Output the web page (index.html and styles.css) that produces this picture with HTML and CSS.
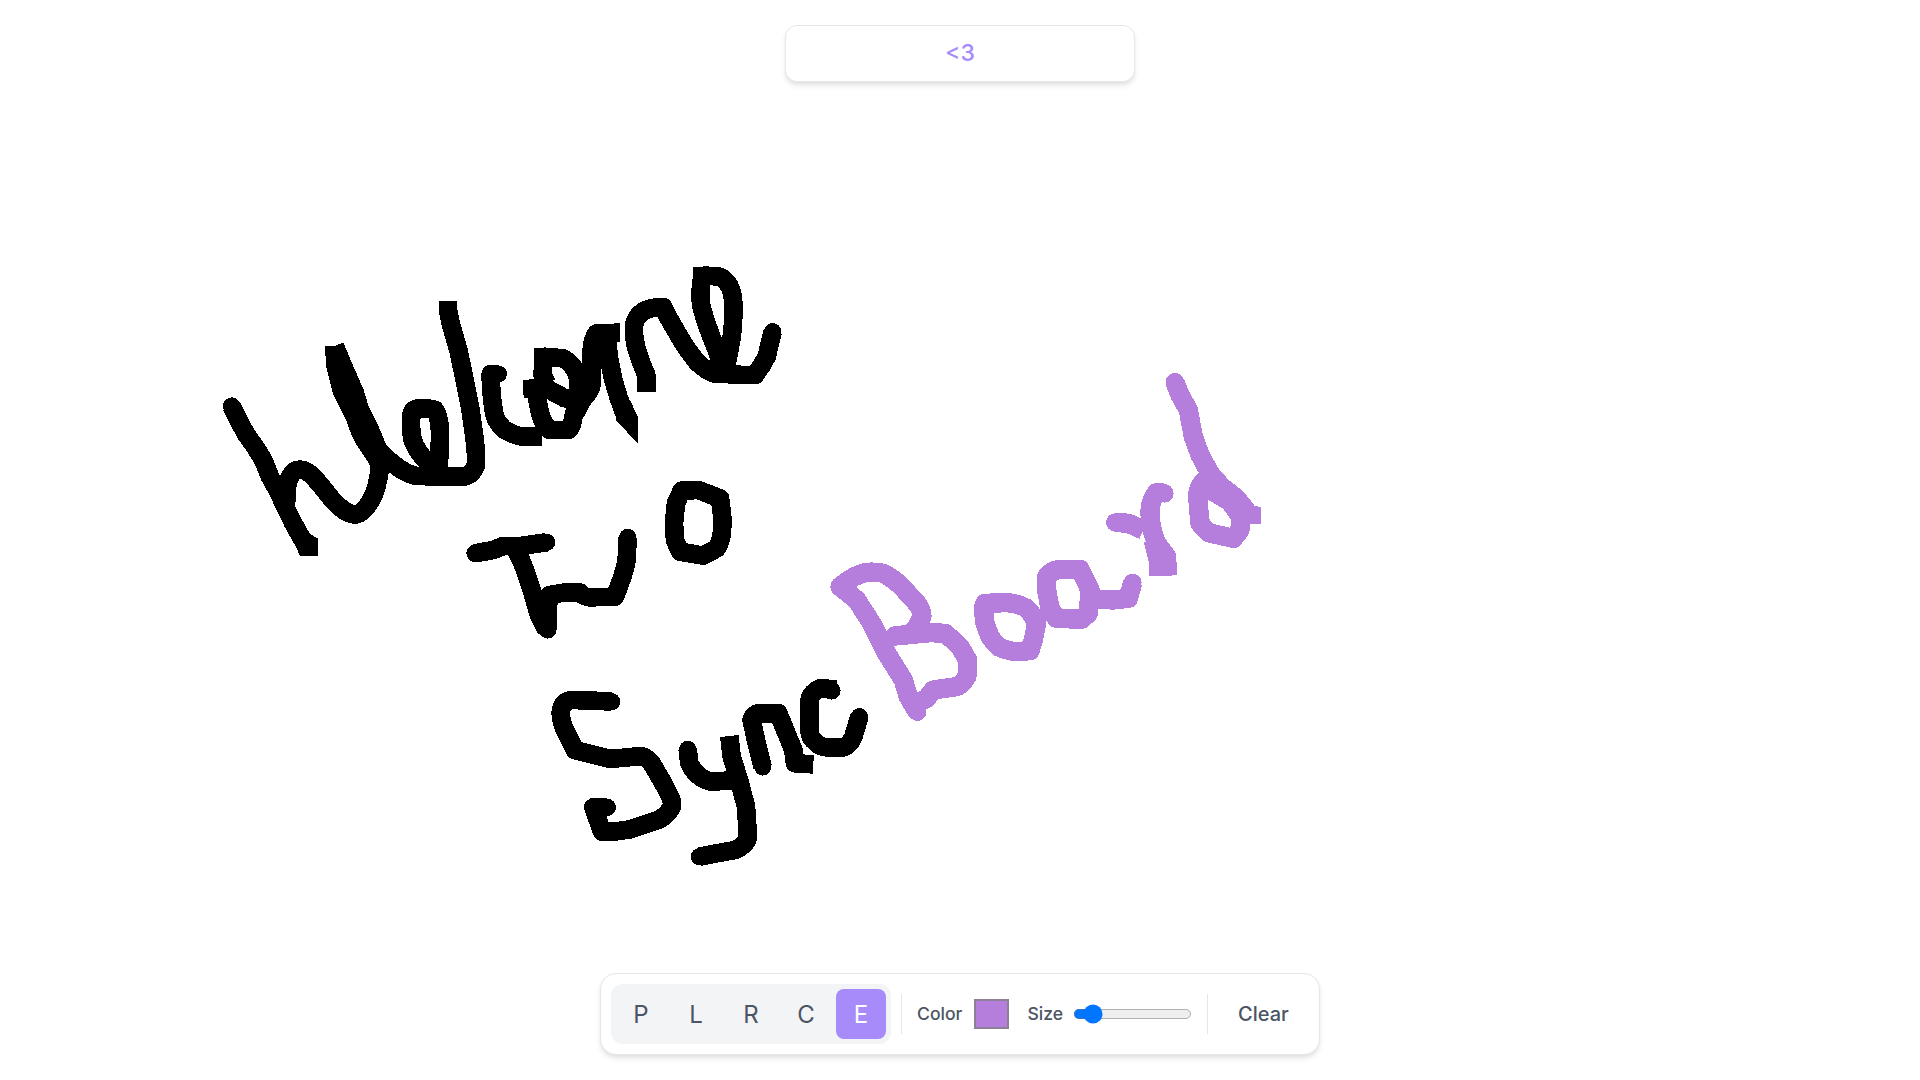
FILE: index.html
```html
<!DOCTYPE html>
<html lang="en">
<head>
<meta charset="utf-8">
<title>SyncBoard</title>
<link rel="stylesheet" href="styles.css">
</head>
<body>
<main class="app">
  <svg class="board" viewBox="0 0 1920 1080" aria-hidden="true">
    <g class="ink ink-black" transform="translate(210 250) scale(.33333)">
      <circle cx="65" cy="468" r="26"/>
      <path d="M65 468L85 510L110 555L135 590L160 630L180 680L205 725L228 775L250 820L275 865"/>
      <polygon points="250,875 270,917 323,917 323,865 297,850"/>
      <path d="M228 775L229 738Q230 700 240 680Q250 660 268 659Q285 658 303 674Q320 690 338 713Q355 735 370 753Q385 770 405 783Q425 795 440 793Q455 790 470 770Q485 750 493 730Q500 710 505 685Q510 660 508 645Q505 630 480 595Q455 560 445 530L435 500L395 420L375 340L374 288"/>
      <path d="M374 288L400 350L435 430L450 480L480 540L505 600L525 620Q545 640 572 658Q600 675 620 678L720 680L760 680Q785 678 798 645Q800 620 793 560L780 470L762 380L745 300L722 220L714 180L714 152"/>
      <path d="M680 680Q688 650 688 620Q690 580 690 545Q688 500 675 480Q668 475 640 475Q610 473 605 490Q600 530 608 570Q618 600 650 635L680 680"/>
    </g>
    <g class="ink ink-black" transform="translate(450 250) scale(.33333)">
      <circle cx="145" cy="372" r="26"/>
      <path d="M145 372L122 372Q122 400 125 430Q128 470 135 500Q145 525 165 540Q190 555 215 560L275 560"/>
      <path d="M280 295L280 320L278 375L290 400"/>
      <path d="M280 320L340 325Q365 340 378 365Q390 400 385 430Q380 470 370 500Q365 540 352 540L300 540Q280 525 270 490L257 420"/>
      <path d="M220 417L290 415L345 445L385 445"/>
      <path d="M370 500L400 445Q425 420 425 400L425 300Q428 265 440 250L510 248"/>
      <path d="M470 262L478 330L490 390L505 440L530 510"/>
      <polygon points="497,510 563,580 563,500 540,450"/>
      <path d="M589 425L589 375Q565 320 557 285Q550 250 552 228Q555 205 572 190Q590 175 615 173L640 172Q650 195 665 220L700 280Q720 310 740 335Q765 360 790 370L880 375L915 375Q935 350 950 320L968 245"/>
      <circle cx="968" cy="245" r="26"/>
      <path d="M757 50L757 78Q745 150 760 190Q775 240 800 300L825 370"/>
      <path d="M757 76L810 80Q848 100 850 160Q852 240 838 300L825 370"/>
    </g>
    <g class="ink ink-black" transform="translate(450 460) scale(.33333)">
      <circle cx="75" cy="280" r="26"/>
      <circle cx="290" cy="247" r="26"/>
      <path d="M75 280L130 270L160 258L210 258L290 247"/>
      <path d="M198 270Q215 300 230 345L248 400L265 460L290 510"/>
      <circle cx="293" cy="510" r="26"/>
      <circle cx="533" cy="232" r="26"/>
      <path d="M533 232L530 300Q522 340 510 370L495 410L420 412Q400 410 390 398L340 398L300 405L293 440L293 510"/>
      <path d="M695 92L745 90L810 115L818 180L815 225Q810 250 800 265L760 287L690 275L675 240L672 190L678 130Z"/>
    </g>
    <g class="ink ink-black" transform="translate(530 670) scale(.33333)">
      <circle cx="245" cy="95" r="26"/>
      <circle cx="232" cy="412" r="26"/>
      <path d="M245 95L215 93L130 90Q93 92 92 130Q95 165 110 190L135 240L240 267L335 258Q355 265 365 280L400 340L423 385Q430 410 420 420Q405 440 385 450L300 478L250 485L216 485L190 412L232 412"/>
      <circle cx="473" cy="238" r="26"/>
      <path d="M473 238L478 280Q490 305 510 320Q530 335 550 335L615 330"/>
      <path d="M598 198L605 260L630 340L648 410L652 470L652 510Q640 530 615 540L560 550L508 560"/>
      <circle cx="508" cy="560" r="26"/>
      <circle cx="698" cy="292" r="25"/>
      <path d="M698 292L680 220L665 150Q672 130 690 130L745 130L790 240L795 280L850 283"/>
      <path d="M920 58L870 55Q838 70 838 100L838 180Q840 205 855 215Q870 232 890 232L940 232Q960 225 970 200L988 140"/>
      <circle cx="988" cy="140" r="26"/>
      <circle cx="905" cy="62" r="27"/>
    </g>
    <g class="ink ink-lilac" transform="translate(820 360) scale(.33333)">
      <circle cx="60" cy="680" r="28"/>
      <circle cx="292" cy="1056" r="27"/>
      <path d="M292 1056L265 1010L250 960L200 880L155 790L110 720L60 680Q100 645 140 637Q170 635 190 640Q220 655 245 680L295 735Q310 760 305 770Q290 810 270 822L225 828L330 818L375 820Q400 840 420 860L443 900Q445 930 440 950Q425 975 410 980L340 990L320 1015L292 1030"/>
      <path d="M495 730L560 728Q595 730 620 745Q640 765 650 790L640 840L630 872L585 875Q555 870 535 860Q520 845 510 830L495 790L490 745Z"/>
      <path d="M680 650Q695 630 720 628L780 628L810 690L805 760L785 778L710 775L690 745L680 690Z"/>
      <path d="M808 716L880 720L925 715L938 668"/>
      <circle cx="938" cy="668" r="27"/>
      <circle cx="885" cy="487" r="27"/>
      <path d="M885 487L925 490L970 510"/>
      <circle cx="1033" cy="400" r="28"/>
      <path d="M1033 398L1010 398Q990 420 990 460Q992 510 1010 550L1040 590L1042 647"/>
      <path d="M1000 540L1015 600L1015 647"/>
      <circle cx="1065" cy="67" r="28"/>
      <path d="M1065 67L1080 105L1105 150L1120 230L1140 285L1170 340L1205 380L1250 415L1285 460"/>
      <polygon points="1322,440 1322,493 1280,493 1260,440 1290,438"/>
      <path d="M1150 365Q1133 385 1133 410L1140 490L1165 518L1240 535L1260 510L1262 470L1230 425L1180 395Z"/>
    </g>
  </svg>

  <input class="room" type="text" value="&lt;3" aria-label="Room name">

  <div class="toolbar">
    <div class="tools">
      <button class="tool">P</button>
      <button class="tool">L</button>
      <button class="tool">R</button>
      <button class="tool">C</button>
      <button class="tool tool-active">E</button>
    </div>
    <span class="divider"></span>
    <label class="field field-color">Color <input class="swatch" type="color" value="#b57edc"></label>
    <label class="field field-size">Size <input class="slider" type="range" min="1" max="50" value="6"></label>
    <span class="divider divider-end"></span>
    <button class="clear">Clear</button>
  </div>
</main>
</body>
</html>
```

FILE: styles.css
```css
* {
  box-sizing: border-box;
}

html,
body {
  margin: 0;
  height: 100%;
  background: #fff;
}

.app {
  position: relative;
  height: 1080px;
  display: flex;
  flex-direction: column;
  align-items: center;
  justify-content: space-between;
  padding: 25px 0 25px;
  font-family: Inter, "Liberation Sans", sans-serif;
  overflow: hidden;
}

.board {
  position: absolute;
  inset: 0;
  width: 1920px;
  height: 1080px;
}

.ink {
  shape-rendering: crispEdges;
}

.ink path {
  fill: none;
  stroke: currentColor;
  stroke-linejoin: round;
}

.ink circle,
.ink polygon {
  fill: currentColor;
}

.ink-black {
  color: #000;
}

.ink-black path {
  stroke-width: 56;
}

.ink-lilac {
  color: #b57edc;
}

.ink-lilac path {
  stroke-width: 58;
}

.room {
  position: relative;
  width: 350px;
  height: 57px;
  border: 1px solid #e5e7eb;
  border-radius: 12px;
  background: #fff;
  box-shadow: 0 4px 6px -1px rgba(0, 0, 0, .1), 0 2px 4px -1px rgba(0, 0, 0, .06);
  color: #a78bfa;
  font: 500 23px Inter, sans-serif;
  line-height: 1;
  padding: 0 0 2px;
  text-align: center;
  outline: none;
}

.toolbar {
  position: relative;
  width: 720px;
  height: 82px;
  display: flex;
  align-items: center;
  padding: 0 10px;
  border: 1px solid #e5e7eb;
  border-radius: 16px;
  background: #fff;
  box-shadow: 0 4px 6px -1px rgba(0, 0, 0, .1), 0 2px 4px -1px rgba(0, 0, 0, .06);
}

.tools {
  display: flex;
  gap: 5px;
  padding: 5px;
  border-radius: 12px;
  background: #f3f4f6;
}

.tool {
  width: 50px;
  height: 50px;
  padding: 0;
  border: 0;
  border-radius: 8px;
  background: transparent;
  color: #4b5563;
  font: 400 24px Inter, sans-serif;
}

.tool-active {
  background: #a78bfa;
  color: #fff;
}

.divider {
  width: 1px;
  height: 40px;
  margin: 0 15px 0 10px;
  background: #e5e7eb;
}

.divider-end {
  margin: 0;
}

.field {
  display: flex;
  align-items: center;
  color: #4b5563;
  font-size: 17.6px;
  font-weight: 500;
  line-height: 20px;
}

.field-color {
  gap: 12px;
}

.field-size {
  gap: 10px;
  margin: 0 15px 0 18px;
}

.swatch {
  width: 35px;
  height: 30px;
  margin: 0;
  padding: 0;
  border: 2px solid #8d8096;
  background: #b57edc;
}

.swatch::-webkit-color-swatch-wrapper {
  padding: 0;
}

.swatch::-webkit-color-swatch {
  border: 0;
}

.slider {
  zoom: 1.25;
  width: 95px;
  margin: 0;
}

.clear {
  flex: 1;
  height: 50px;
  margin-right: -10px;
  padding: 0;
  border: 0;
  background: transparent;
  color: #4b5563;
  font: 500 20px Inter, sans-serif;
}
```
